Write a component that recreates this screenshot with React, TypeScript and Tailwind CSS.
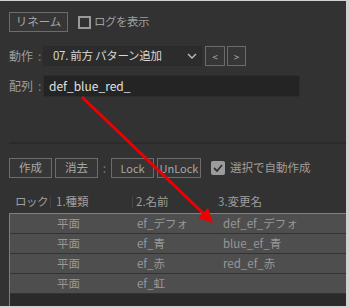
import React from 'react'

const FONT = { fontFamily: '"Noto Sans CJK JP", "Noto Sans", sans-serif' }

const ROWS = [
  { kind: '平面', name: 'ef_デフォ', next: 'def_ef_デフォ' },
  { kind: '平面', name: 'ef_青', next: 'blue_ef_青' },
  { kind: '平面', name: 'ef_赤', next: 'red_ef_赤' },
  { kind: '平面', name: 'ef_虹', next: '' },
]

function Btn({ label, w, small }: { label: string; w: string; small?: boolean }) {
  return (
    <div
      className={`${w} ${small ? 'text-[11px]' : 'text-[11.5px]'} flex h-[20px] items-center justify-center whitespace-nowrap border border-[#6c6c6c] bg-[#363636] text-[#a8a8a8]`}
    >
      {label}
    </div>
  )
}

export default function App() {
  return (
    <div className="h-[308px] w-[349px] bg-[#d2d2d2] pb-[2px] pr-[3px] pt-[1px]" style={FONT}>
      <div className="relative flex h-full flex-col bg-[#323232] pl-[9px]">
        {/* rename + log */}
        <div className="mt-[11px] flex h-[20px] items-center">
          <Btn label="リネーム" w="w-[59px]" />
          <div className="ml-[10px] h-[13px] w-[13px] border-2 border-[#9a9a9a]" />
          <span className="ml-[3px] text-[11.5px] tracking-[-0.5px] text-[#9e9e9e]">ログを表示</span>
        </div>

        {/* action select */}
        <div className="mt-[14px] flex h-[20px] items-center">
          <span className="w-[29px] text-[12px] text-[#9e9e9e]">動作</span>
          <span className="w-[5px] text-[12px] text-[#7a7a7a]">:</span>
          <div className="flex h-[20px] w-[159px] items-center justify-between border border-[#2a2a2a] bg-[#2c2c2c] pl-[9px] pr-[4px] text-[11.5px] text-[#d8d8d8]">
            <span className="whitespace-nowrap tracking-[-0.3px]">07. 前方 パターン追加</span>
            <svg width="10" height="6" viewBox="0 0 10 6">
              <path d="M1 1 L5 5 L9 1" fill="none" stroke="#c0c0c0" strokeWidth="1.3" />
            </svg>
          </div>
          <div className="ml-[3px] flex h-[20px] w-[20px] items-center justify-center border border-[#6c6c6c] bg-[#363636] text-[10px] text-[#a8a8a8]">
            &lt;
          </div>
          <div className="ml-[2px] flex h-[20px] w-[19px] items-center justify-center border border-[#6c6c6c] bg-[#363636] text-[10px] text-[#a8a8a8]">
            &gt;
          </div>
        </div>

        {/* array input */}
        <div className="mt-[9px] flex h-[22px] items-center">
          <span className="w-[29px] text-[12px] text-[#9e9e9e]">配列</span>
          <span className="w-[5px] text-[12px] text-[#7a7a7a]">:</span>
          <div className="flex h-[22px] w-[257px] items-center rounded-[2px] border border-[#2c2c2c] bg-[#242424] pl-[5px] text-[12px] text-[#e0e0e0]">
            def_blue_red_
          </div>
        </div>

        <div className="mt-[45px] h-[2px] bg-[#2a2a2a]" />

        {/* action buttons */}
        <div className="mt-[14px] flex h-[20px] items-center">
          <Btn label="作成" w="w-[43px]" />
          <div className="ml-[3px]">
            <Btn label="消去" w="w-[43px]" />
          </div>
          <span className="w-[13px] text-center text-[12px] text-[#7a7a7a]">:</span>
          <Btn label="Lock" w="w-[43px]" small />
          <div className="ml-[3px]">
            <Btn label="UnLock" w="w-[44px]" small />
          </div>
          <div className="ml-[10px] flex h-[14px] w-[14px] items-center justify-center rounded-[2px] bg-[#9c9c9c]">
            <svg width="10" height="8" viewBox="0 0 10 8">
              <path d="M1 4 L4 7 L9 1" fill="none" stroke="#333" strokeWidth="1.8" />
            </svg>
          </div>
          <span className="ml-[5px] text-[11.5px] text-[#9e9e9e]">選択で自動作成</span>
        </div>

        {/* header */}
        <div className="mt-[14px] flex h-[19px] items-center whitespace-nowrap text-[11.5px] text-[#9e9e9e]">
          <span className="w-[41px] pl-[6px] tracking-[-0.5px]">ロック</span>
          <span className="h-[12px] w-[1px] bg-[#444]" />
          <span className="w-[81px] pl-[5px]">1.種類</span>
          <span className="h-[12px] w-[1px] bg-[#444]" />
          <span className="w-[84px] pl-[3px]">2.名前</span>
          <span className="pl-[1px]">3.変更名</span>
        </div>

        {/* table */}
        <div className="mt-[2px] flex flex-1 flex-col border-l border-t border-[#3b8fe0] bg-[#2a2a2a]">
          {ROWS.map((r) => (
            <div
              key={r.name}
              className="flex h-[20px] items-center whitespace-nowrap border-b border-[#333] bg-[#4e4e4e] text-[11.5px] text-[#989898]"
            >
              <span className="w-[47px]" />
              <span className="w-[80px]">{r.kind}</span>
              <span className="w-[86px]">{r.name}</span>
              <span>{r.next}</span>
            </div>
          ))}
        </div>

        {/* red arrow overlay */}
        <svg className="pointer-events-none absolute left-0 top-0" width="346" height="305">
          <line x1="82" y1="96" x2="205" y2="214" stroke="#ee0000" strokeWidth="3" />
          <polygon points="213,222 198,217 208,207" fill="#ee0000" />
        </svg>
      </div>
    </div>
  )
}
